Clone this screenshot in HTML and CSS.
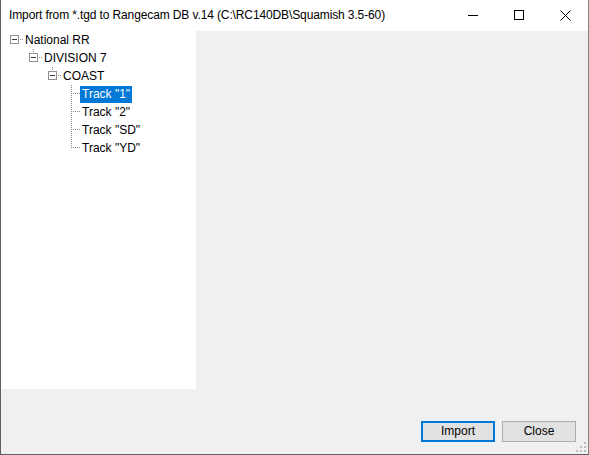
FILE: index.html
```html
<!DOCTYPE html>
<html>
<head>
<meta charset="utf-8">
<link rel="stylesheet" href="styles.css">
</head>
<body>
<div class="window">
  <div class="titlebar">
    <div class="title">Import from *.tgd to Rangecam DB v.14 (C:\RC140DB\Squamish 3.5-60)</div>
    <div class="caption-btns">
      <div class="cbtn"><svg width="10" height="10" viewBox="0 0 10 10"><path d="M0 5.5H10" stroke="#000" stroke-width="1"/></svg></div>
      <div class="cbtn"><svg width="10" height="10" viewBox="0 0 10 10"><rect x="0.5" y="0.5" width="9" height="9" fill="none" stroke="#000" stroke-width="1"/></svg></div>
      <div class="cbtn"><svg width="11" height="11" viewBox="0 0 11 11"><path d="M0.5 0.5L10.5 10.5M10.5 0.5L0.5 10.5" stroke="#000" stroke-width="1"/></svg></div>
    </div>
  </div>
  <div class="client">
    <div class="tree">
      <div class="row l0"><span class="exp root"><span class="box"></span><span class="hdots"></span></span><span class="label">National RR</span></div>
      <div class="row l1"><span class="exp vtop"><span class="box"></span><span class="hdots"></span></span><span class="label">DIVISION 7</span></div>
      <div class="row l2"><span class="exp vtop"><span class="box"></span><span class="hdots"></span></span><span class="label">COAST</span></div>
      <div class="row l3"><span class="exp leaf"><span class="hdots"></span></span><span class="label selected">Track "1"</span></div>
      <div class="row l3"><span class="exp leaf"><span class="hdots"></span></span><span class="label">Track "2"</span></div>
      <div class="row l3"><span class="exp leaf"><span class="hdots"></span></span><span class="label">Track "SD"</span></div>
      <div class="row l3"><span class="exp leaf last"><span class="hdots"></span></span><span class="label">Track "YD"</span></div>
    </div>
    <div class="buttons">
      <button class="btn default">Import</button>
      <button class="btn">Close</button>
    </div>
    <svg class="grip" width="10" height="10" viewBox="0 0 10 10">
      <rect x="8" y="0" width="2" height="2" fill="#bdbdbd"/>
      <rect x="4" y="4" width="2" height="2" fill="#bdbdbd"/>
      <rect x="8" y="4" width="2" height="2" fill="#bdbdbd"/>
      <rect x="0" y="8" width="2" height="2" fill="#bdbdbd"/>
      <rect x="4" y="8" width="2" height="2" fill="#bdbdbd"/>
      <rect x="8" y="8" width="2" height="2" fill="#bdbdbd"/>
    </svg>
  </div>
</div>
</body>
</html>
```

FILE: styles.css
```css
* { box-sizing: border-box; }
html, body { margin: 0; padding: 0; background: #ffffff; }
body {
  font-family: "Segoe UI", "Liberation Sans", Arial, sans-serif;
  font-size: 12px;
  color: #000;
}
.window {
  width: 589px;
  height: 455px;
  border-left: 1px solid #5f5f5f;
  border-right: 1px solid #838383;
  border-bottom: 1px solid #5f5f5f;
  display: flex;
  flex-direction: column;
  background: #fff;
}
.titlebar {
  height: 31px;
  display: flex;
  align-items: center;
  background: #fff;
}
.title {
  flex: 1;
  padding-left: 8px;
  padding-bottom: 1px;
  white-space: nowrap;
  overflow: hidden;
  letter-spacing: -0.12px;
}
.caption-btns {
  display: flex;
  height: 31px;
}
.cbtn {
  width: 46px;
  height: 31px;
  display: flex;
  align-items: center;
  justify-content: center;
  padding-bottom: 1px;
}
.client {
  position: relative;
  flex: 1;
  background: #f0f0f0;
  display: flex;
  flex-direction: column;
}
.tree {
  width: 195px;
  height: 358px;
  background: #fff;
  padding-top: 0;
}
.row {
  display: flex;
  align-items: center;
  height: 18px;
  padding-left: 4px;
}
.row.l1 { padding-left: 23px; }
.row.l2 { padding-left: 42px; }
.row.l3 { padding-left: 61px; }
.exp {
  position: relative;
  width: 19px;
  height: 18px;
  flex: none;
}
.box {
  position: absolute;
  left: 5px;
  top: 4px;
  width: 9px;
  height: 9px;
  border: 1px solid #919191;
  background: #fff;
}
.box::after {
  content: "";
  position: absolute;
  left: 1px;
  top: 3px;
  width: 5px;
  height: 1px;
  background: #3c3c3c;
}
.hdots {
  position: absolute;
  left: 15px;
  top: 8px;
  width: 4px;
  height: 1px;
  background-image: linear-gradient(to right, #8a8a8a 50%, transparent 50%);
  background-size: 2px 1px;
}
.vtop::before {
  content: "";
  position: absolute;
  left: 9px;
  top: 0;
  width: 1px;
  height: 4px;
  background-image: linear-gradient(to bottom, #8a8a8a 50%, transparent 50%);
  background-size: 1px 2px;
}
.leaf::before {
  content: "";
  position: absolute;
  left: 9px;
  top: 0;
  width: 1px;
  height: 18px;
  background-image: linear-gradient(to bottom, #8a8a8a 50%, transparent 50%);
  background-size: 1px 2px;
}
.leaf.last::before { height: 9px; }
.leaf .hdots {
  left: 9px;
  width: 10px;
}
.label {
  height: 17px;
  line-height: 17px;
  padding: 0 2px;
  margin-left: -1px;
  white-space: nowrap;
}
.label.selected {
  background: #0078d7;
  color: #fff;
}
.buttons {
  display: flex;
  justify-content: flex-end;
  gap: 7px;
  margin-top: 32px;
  padding-right: 12px;
}
.btn {
  width: 74px;
  height: 21px;
  background: #e1e1e1;
  border: 1px solid #adadad;
  font-family: "Segoe UI", "Liberation Sans", Arial, sans-serif;
  font-size: 12px;
  color: #000;
  padding: 0;
  line-height: 17px;
}
.btn.default {
  border: 2px solid #0078d7;
}
.grip {
  position: absolute;
  right: 2px;
  bottom: 2px;
}
```
